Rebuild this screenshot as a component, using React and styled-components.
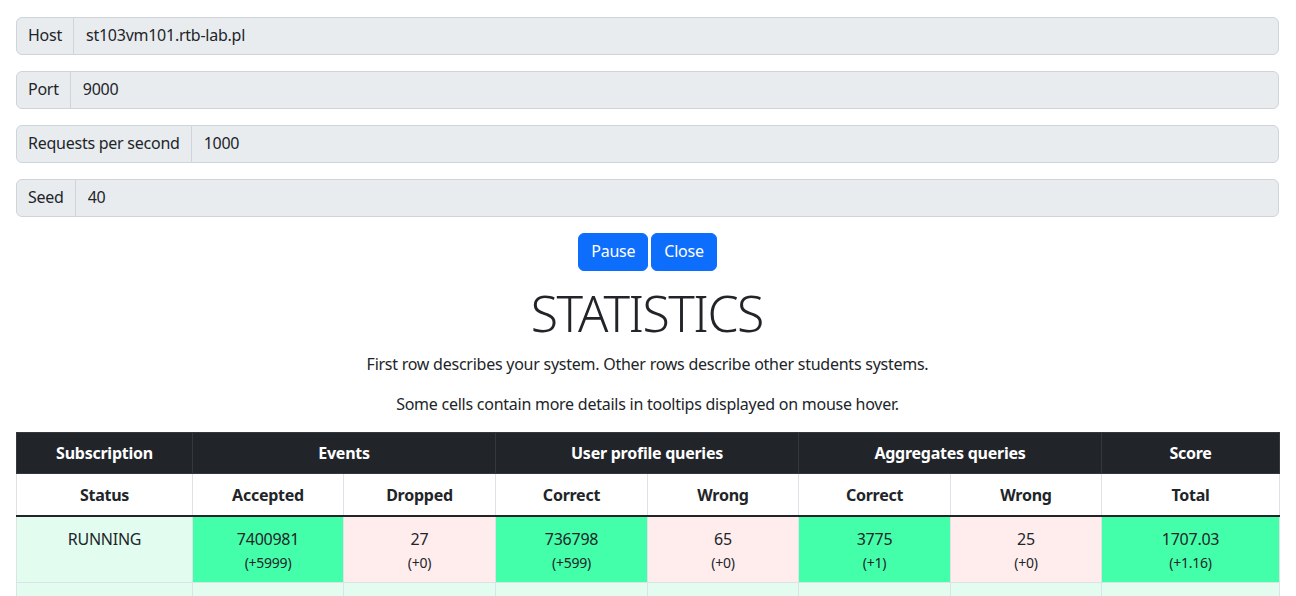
import React from "react";
import styled, { createGlobalStyle } from "styled-components";

const GlobalStyle = createGlobalStyle`
  * { box-sizing: border-box; }
  body {
    margin: 0;
    background: #fff;
    color: #212529;
    font-family: "Noto Sans", "Open Sans", sans-serif;
    font-size: 16px;
    line-height: 1.5;
    letter-spacing: -0.25px;
  }
`;

const Page = styled.div`
  padding: 17px 17px 0 16px;
`;

const InputGroup = styled.div`
  display: flex;
  height: 38px;
  margin-bottom: 16px;
`;

const GroupLabel = styled.span`
  display: flex;
  align-items: center;
  padding: 5px 11px 7px;
  background: #e9ecef;
  border: 1px solid #ced4da;
  border-radius: 6px 0 0 6px;
  white-space: nowrap;
`;

const GroupInput = styled.input`
  flex: 1;
  min-width: 0;
  margin-left: -1px;
  padding: 5px 12px 7px;
  font: inherit;
  letter-spacing: inherit;
  color: #212529;
  background: #e9ecef;
  border: 1px solid #ced4da;
  border-radius: 0 6px 6px 0;
  outline: none;
`;

const ButtonRow = styled.div`
  display: flex;
  justify-content: center;
  gap: 3px;
`;

const Button = styled.button`
  padding: 5px 12px 7px;
  font: inherit;
  letter-spacing: inherit;
  line-height: 24px;
  color: #fff;
  background: #0d6efd;
  border: 1px solid #0d6efd;
  border-radius: 6px;
`;

const Title = styled.h1`
  margin: 12px 0 9px;
  padding-right: 1.5px;
  text-align: center;
  font-family: "Noto Sans", sans-serif;
  font-size: 50px;
  font-weight: 300;
  letter-spacing: -1.5px;
  line-height: 1.2;
`;

const Note = styled.p`
  margin: 0 0 16px;
  text-align: center;
`;

const Table = styled.table`
  width: 100%;
  table-layout: fixed;
  border-collapse: collapse;
  text-align: center;
`;

const Col = styled.col`
  width: ${(p) => p.$w}px;
`;

const GroupHead = styled.th`
  padding: 8px;
  font-weight: 700;
  color: #fff;
  background: #212529;
  border: 1px solid #32383e;
`;

const SubHead = styled.th`
  padding: 9px 8px 8px;
  font-weight: 700;
  background: #fff;
  border: 1px solid #dee2e6;
`;

const Body = styled.tbody`
  border-top: 2px solid #212529;
`;

const cellBg = { good: "#44ffaa", bad: "#ffeded", neutral: "#e2fdf0" };

const Cell = styled.td`
  padding: 10px 8px 6px;
  vertical-align: top;
  background: ${(p) => cellBg[p.$tone]};
  border: 1px solid #dee2e6;
  height: 66px;
`;

const Delta = styled.small`
  display: block;
  font-size: 14px;
  line-height: 24px;
`;

const fields = [
  ["Host", "st103vm101.rtb-lab.pl"],
  ["Port", "9000"],
  ["Requests per second", "1000"],
  ["Seed", "40"],
];

const widths = [176, 151, 152, 152, 151, 152, 151, 178];

const row = [
  { tone: "neutral", value: "RUNNING" },
  { tone: "good", value: "7400981", delta: "(+5999)" },
  { tone: "bad", value: "27", delta: "(+0)" },
  { tone: "good", value: "736798", delta: "(+599)" },
  { tone: "bad", value: "65", delta: "(+0)" },
  { tone: "good", value: "3775", delta: "(+1)" },
  { tone: "bad", value: "25", delta: "(+0)" },
  { tone: "good", value: "1707.03", delta: "(+1.16)" },
];

export default function App() {
  return (
    <Page>
      <GlobalStyle />
      {fields.map(([label, value]) => (
        <InputGroup key={label}>
          <GroupLabel>{label}</GroupLabel>
          <GroupInput readOnly value={value} />
        </InputGroup>
      ))}
      <ButtonRow>
        <Button>Pause</Button>
        <Button>Close</Button>
      </ButtonRow>
      <Title>STATISTICS</Title>
      <Note>First row describes your system. Other rows describe other students systems.</Note>
      <Note>Some cells contain more details in tooltips displayed on mouse hover.</Note>
      <Table>
        <colgroup>
          {widths.map((w, i) => (
            <Col key={i} $w={w} />
          ))}
        </colgroup>
        <thead>
          <tr>
            <GroupHead>Subscription</GroupHead>
            <GroupHead colSpan={2}>Events</GroupHead>
            <GroupHead colSpan={2}>User profile queries</GroupHead>
            <GroupHead colSpan={2}>Aggregates queries</GroupHead>
            <GroupHead>Score</GroupHead>
          </tr>
          <tr>
            <SubHead>Status</SubHead>
            <SubHead>Accepted</SubHead>
            <SubHead>Dropped</SubHead>
            <SubHead>Correct</SubHead>
            <SubHead>Wrong</SubHead>
            <SubHead>Correct</SubHead>
            <SubHead>Wrong</SubHead>
            <SubHead>Total</SubHead>
          </tr>
        </thead>
        <Body>
          <tr>
            {row.map((c, i) => (
              <Cell key={i} $tone={c.tone}>
                {c.value}
                {c.delta && <Delta>{c.delta}</Delta>}
              </Cell>
            ))}
          </tr>
          <tr>
            {row.map((c, i) => (
              <Cell key={i} $tone="neutral" />
            ))}
          </tr>
        </Body>
      </Table>
    </Page>
  );
}
